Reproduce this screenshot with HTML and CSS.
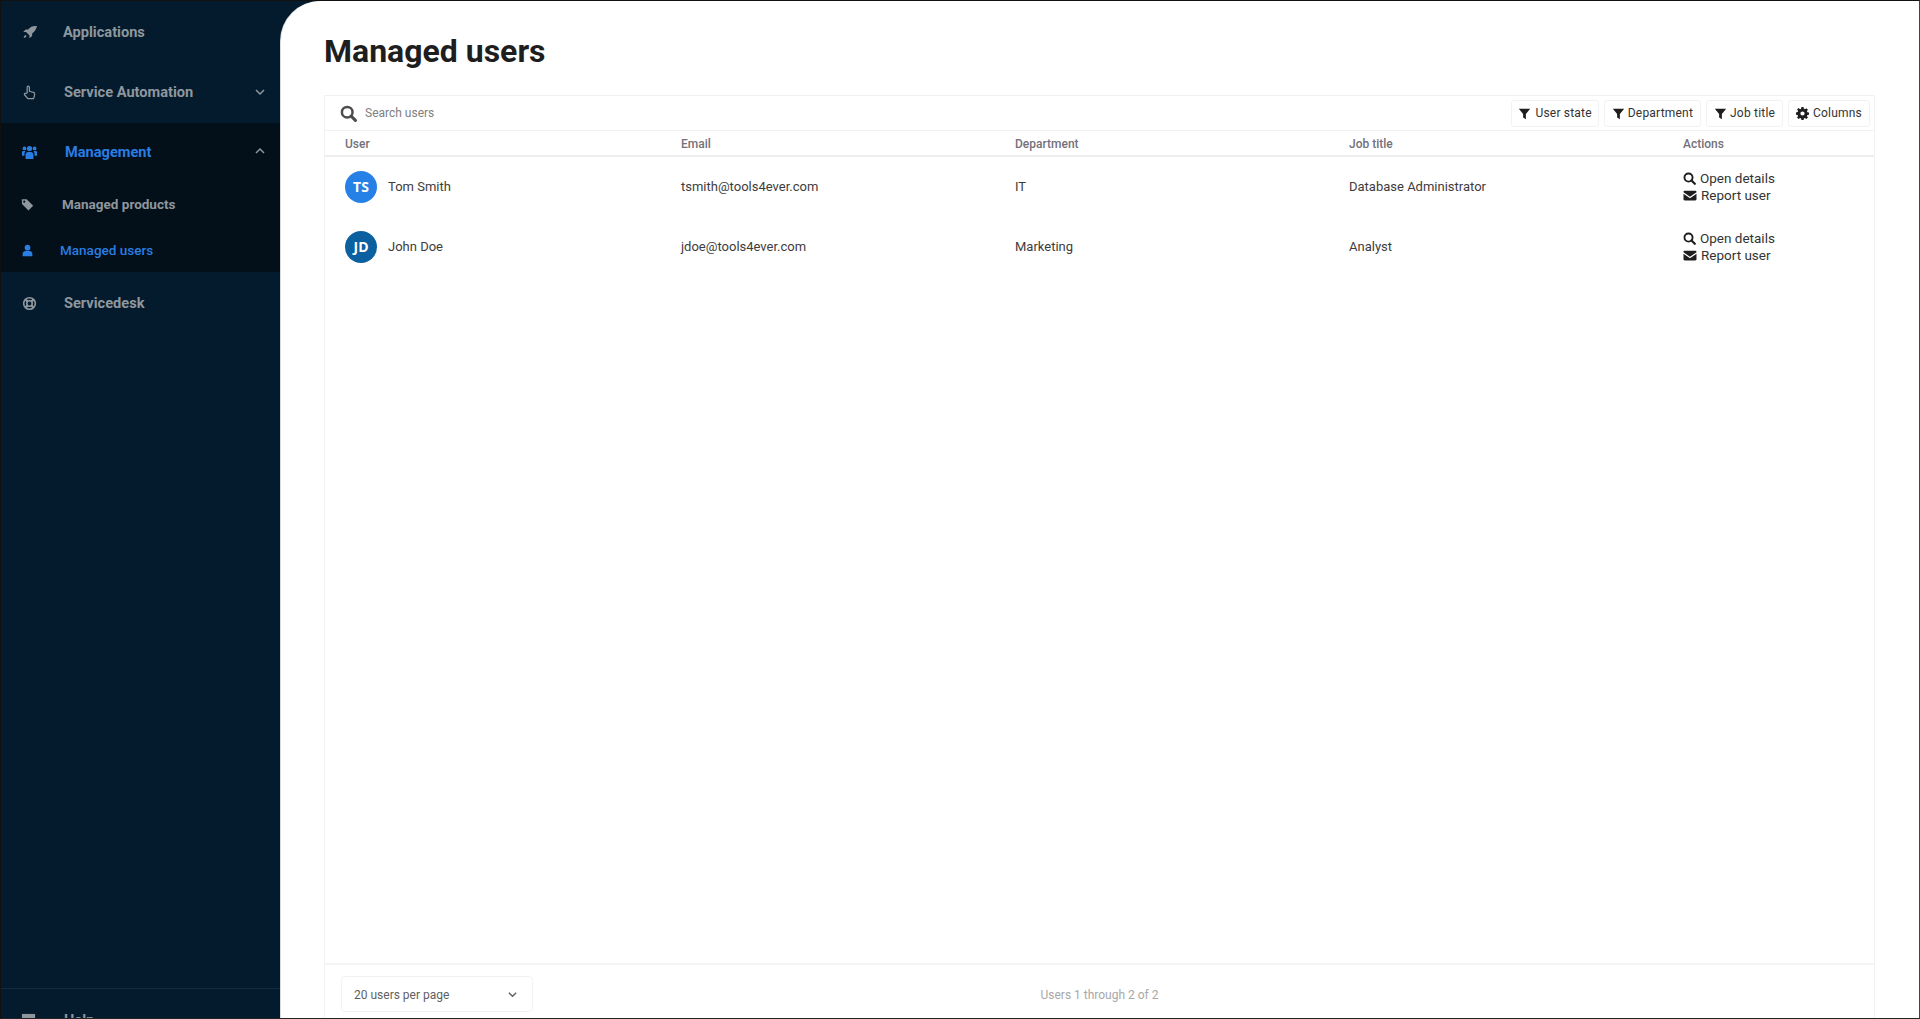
FILE: index.html
```html
<!DOCTYPE html>
<html lang="en">
<head>
<meta charset="utf-8">
<title>Managed users</title>
<link rel="stylesheet" href="styles.css">
</head>
<body>
<svg class="defs" width="0" height="0" aria-hidden="true">
  <symbol id="i-filter" viewBox="0 0 16 16"><path d="M1 2h14L9.700 8.600V15l-3.400-2V8.600z" fill="currentColor"/></symbol>
  <symbol id="i-search" viewBox="0 0 16 16"><circle cx="6.800" cy="6.800" r="5" fill="none" stroke="currentColor" stroke-width="2.300"/><path d="M10.500 10.500l4 4" stroke="currentColor" stroke-width="2.800" stroke-linecap="round"/></symbol>
  <symbol id="i-mail" viewBox="0 0 16 16"><path d="M0 3.500C0 2.700.7 2 1.500 2h13c.8 0 1.500.7 1.500 1.500v.6L8 9.600 0 4.100zM0 5.900v6.600c0 .8.7 1.500 1.500 1.500h13c.8 0 1.500-.7 1.500-1.500V5.900l-8 5.500z" fill="currentColor"/></symbol>
  <symbol id="i-gear" viewBox="0 0 16 16"><path fill-rule="evenodd" d="M6.700 0h2.600l.4 2.200 1.300.6 1.800-1.300 1.900 1.900-1.300 1.800.6 1.300 2 .4v2.600l-2 .4-.6 1.300 1.300 1.800-1.900 1.900-1.800-1.300-1.300.6-.4 2.200H6.700l-.4-2.200-1.300-.6-1.800 1.300-1.900-1.900 1.300-1.800-.6-1.300-2-.4V6.700l2-.4.6-1.300-1.300-1.800 1.900-1.900L5 2.800l1.300-.6zM8 5.400a2.600 2.600 0 1 0 0 5.200 2.600 2.600 0 0 0 0-5.200z" fill="currentColor"/></symbol>
  <symbol id="i-chev" viewBox="0 0 12 12"><path d="M2 4l4 4 4-4" fill="none" stroke="currentColor" stroke-width="1.500"/></symbol>
</svg>
<div class="app">
  <aside class="sidebar">
    <nav class="nav">
      <a class="nav-item nav-apps">
        <svg class="nav-icon" viewBox="0 0 16 16"><path d="M15 1c-3.500-.2-6.300 1-8.400 3.700H3.900L1.300 7.500h3l3.700 3.700-.1 3 2.900-2.600V9c2.900-2 4.300-4.700 5.200-8zM3.800 10.700c-1.100.4-1.800 1.500-2 3 1.500-.2 2.600-.9 3-2z" fill="currentColor"/></svg>
        <span class="nav-label">Applications</span>
      </a>
      <a class="nav-item nav-auto">
        <svg class="nav-icon" viewBox="0 0 16 16"><path d="M5.500 8.500V2.300a1.200 1.200 0 0 1 2.400 0v4.500l3.800.9c1 .2 1.800 1 1.800 2.100 0 1.700-.5 3-1.200 4.700H6.300L2.700 10.400c-.8-1.100.7-2.400 1.700-1.400z" fill="none" stroke="currentColor" stroke-width="1.300"/></svg>
        <span class="nav-label">Service Automation</span>
        <svg class="chev"><use href="#i-chev"/></svg>
      </a>
      <div class="group">
        <a class="nav-item nav-mgmt active">
          <svg class="nav-icon" viewBox="0 0 16 16"><circle cx="8" cy="3.800" r="2.800" fill="currentColor"/><circle cx="2.600" cy="3.600" r="2" fill="currentColor"/><circle cx="13.400" cy="3.600" r="2" fill="currentColor"/><path d="M3.800 15v-4.500C3.800 8.500 5 7.400 6.500 7.400h3c1.500 0 2.700 1.100 2.700 3.100V15zM0 11.500V7.800C0 6.800.7 6.300 1.500 6.300h2.200C3 7.200 2.600 8.300 2.600 9.500v2zM16 11.500V7.800c0-1-.7-1.500-1.500-1.500h-2.200c.7.900 1.100 2 1.100 3.200v2z" fill="currentColor"/></svg>
          <span class="nav-label">Management</span>
          <svg class="chev chev-up"><use href="#i-chev"/></svg>
        </a>
        <a class="sub-item sub-products">
          <svg class="sub-icon" viewBox="0 0 16 16"><path fill-rule="evenodd" d="M1 1.500h6l8 8-5.800 5.800-8-8zM4 3.200a1.300 1.300 0 1 0 0 2.600 1.300 1.300 0 0 0 0-2.600z" fill="currentColor"/></svg>
          <span>Managed products</span>
        </a>
        <a class="sub-item sub-users active">
          <svg class="sub-icon" viewBox="0 0 16 16"><circle cx="8" cy="4.500" r="3.500" fill="currentColor"/><path d="M2 15v-3c0-2 1.500-3.500 3.500-3.500h5c2 0 3.500 1.500 3.500 3.500v3z" fill="currentColor"/></svg>
          <span>Managed users</span>
        </a>
      </div>
      <a class="nav-item nav-desk">
        <svg class="nav-icon" viewBox="0 0 16 16"><circle cx="8" cy="8" r="6.200" fill="none" stroke="currentColor" stroke-width="1.700"/><circle cx="8" cy="8" r="2.900" fill="none" stroke="currentColor" stroke-width="1.700"/><path d="M3.600 3.600l2.400 2.400M12.400 3.600L10 6M3.600 12.400L6 10M12.400 12.400L10 10" stroke="currentColor" stroke-width="2.400"/></svg>
        <span class="nav-label">Servicedesk</span>
      </a>
    </nav>
    <div class="side-foot">
      <a class="nav-item nav-help">
        <svg class="nav-icon help-icon" viewBox="0 0 16 16"><rect x="1" y="1" width="14" height="10" fill="currentColor"/></svg>
        <span class="nav-label">Help</span>
      </a>
    </div>
  </aside>
  <main class="content">
    <h1 class="title">Managed users</h1>
    <section class="panel">
      <div class="toolbar">
        <div class="search">
          <svg class="search-icon"><use href="#i-search"/></svg>
          <span class="search-text">Search users</span>
        </div>
        <div class="tools">
          <button class="tool tool-first"><svg class="tool-icon"><use href="#i-filter"/></svg>User state</button>
          <button class="tool"><svg class="tool-icon"><use href="#i-filter"/></svg>Department</button>
          <button class="tool"><svg class="tool-icon"><use href="#i-filter"/></svg>Job title</button>
          <button class="tool"><svg class="tool-icon gear"><use href="#i-gear"/></svg>Columns</button>
        </div>
      </div>
      <div class="row head">
        <div>User</div><div>Email</div><div>Department</div><div>Job title</div><div>Actions</div>
      </div>
      <div class="rows">
        <div class="row item">
          <div class="user"><span class="avatar a-blue">TS</span>Tom Smith</div>
          <div>tsmith@tools4ever.com</div><div>IT</div><div>Database Administrator</div>
          <div class="actions">
            <a class="action"><svg class="act-icon"><use href="#i-search"/></svg>Open details</a>
            <a class="action"><svg class="act-icon mail"><use href="#i-mail"/></svg>Report user</a>
          </div>
        </div>
        <div class="row item">
          <div class="user"><span class="avatar a-dark">JD</span>John Doe</div>
          <div>jdoe@tools4ever.com</div><div>Marketing</div><div>Analyst</div>
          <div class="actions">
            <a class="action"><svg class="act-icon"><use href="#i-search"/></svg>Open details</a>
            <a class="action"><svg class="act-icon mail"><use href="#i-mail"/></svg>Report user</a>
          </div>
        </div>
      </div>
      <div class="pager">
        <div class="per-page"><span>20 users per page</span><svg class="per-chev"><use href="#i-chev"/></svg></div>
        <div class="count">Users 1 through 2 of 2</div>
      </div>
    </section>
  </main>
</div>
</body>
</html>
```
FILE: styles.css
```css
* { box-sizing: border-box; }
html, body { margin: 0; height: 100%; overflow: hidden; }
body { font-family: Roboto, sans-serif; color: #333; background: #041b2d; }
.defs { position: absolute; }
.app {
  display: flex; height: 1019px; overflow: hidden;
  border: 1px solid #111; border-right-color: #3a4358; border-bottom-color: #222;
  background: #041b2d;
}
.sidebar { width: 280px; flex: none; display: flex; flex-direction: column; background: #041b2d; height: 1017px; overflow: hidden; }
.nav { flex: 1; display: flex; flex-direction: column; }
.nav-item { display: flex; align-items: center; height: 60px; color: #8f979e; font-size: 14.6px; font-weight: 700; position: relative; }
.nav-icon { width: 15px; height: 15px; margin-left: 21px; flex: none; }
.nav-label { margin-left: 27px; }
.nav-apps { height: 62px; }
.nav-apps .nav-label { margin-left: 26px; }
.nav-auto { height: 60px; padding-bottom: 2px; }
.nav-mgmt { height: 58px; }
.nav-mgmt .nav-label { margin-left: 28px; }
.active { color: #2a7de1; }
.chev { width: 12px; height: 12px; position: absolute; left: 253px; top: calc(50% - 7px); color: #8f979e; }
.chev-up { transform: rotate(180deg); }
.group { background: #030f19; display: flex; flex-direction: column; height: 149px; }
.sub-item { display: flex; align-items: center; height: 46px; font-size: 13.5px; font-weight: 700; color: #8f979e; }
.sub-item.active { color: #2a7de1; font-weight: 500; height: 45px; padding-top: 1px; }
.sub-icon { width: 13px; height: 13px; margin-left: 20px; flex: none; }
.sub-products span { margin-left: 28px; }
.sub-users span { margin-left: 26px; }
.nav-desk { height: 62px; }
.side-foot { border-top: 1px solid #162c3d; height: 30px; flex: none; margin-top: auto; }
.side-foot .nav-item { height: 62px; }
.help-icon { margin-left: 20px; }
.help-icon + .nav-label { margin-left: 28px; }
.content {
  flex: 1; min-width: 0; background: #fff; border-top-left-radius: 40px;
  padding: 28px 44px 0 43px; display: flex; flex-direction: column; height: 1017px; overflow: hidden;
  box-shadow: -1px 0 0 #d8dbe0;
}
.title { margin: 0 0 22px; font-size: 32px; line-height: 44px; font-weight: 700; color: #1e1e1e; }
.panel { flex: 1; min-height: 0; border: 1px solid #f2f2f2; display: flex; flex-direction: column; border-bottom: 0; }
.toolbar { height: 35px; flex: none; display: flex; align-items: center; justify-content: space-between; padding: 0 4px 0 15px; border-bottom: 1px solid #f2f2f2; }
.search { display: flex; align-items: center; gap: 8px; }
.search-icon { width: 17px; height: 17px; color: #4c4c4c; }
.search-text { font-size: 12px; color: #80807f; }
.tools { display: flex; gap: 5px; }
.tool {
  height: 27px; padding: 0 7px; display: flex; align-items: center; gap: 3px; background: #fff;
  border: 1px solid #f2f2f2; border-radius: 3px; font: 400 12px Roboto, sans-serif; color: #333; letter-spacing: .2px;
}
.tool-first { padding-left: 6px; gap: 4px; padding-right: 6px; }
.tool-icon { width: 13px; height: 13px; color: #1e1e1e; }
.gear { margin-right: 1px; }
.row { display: grid; grid-template-columns: 336px 334px 334px 334px 1fr; padding: 0 0 0 20px; align-items: center; font-size: 13px; }
.head { height: 26px; flex: none; padding-top: 2px; font-size: 12px; font-weight: 500; color: #74717a; border-bottom: 2px solid #eeeeee; }
.rows { flex: 1; display: flex; flex-direction: column; min-height: 0; }
.item { height: 60px; padding-bottom: 1px; color: #3e3c3c; }
.user { display: flex; align-items: center; gap: 11px; }
.avatar { width: 32px; height: 32px; border-radius: 50%; display: flex; align-items: center; justify-content: center; color: #fff; font: 700 14px "Open Sans", sans-serif; }
.a-blue { background: #2681e6; }
.a-dark { background: #0b619f; }
.actions { display: flex; flex-direction: column; }
.action { display: flex; align-items: center; gap: 4px; line-height: 17px; font-size: 13.5px; color: #333; }
.act-icon { width: 13px; height: 13px; color: #1e1e1e; }
.mail { width: 14px; }
.pager { height: 55px; flex: none; border-top: 2px solid #f4f4f4; display: flex; align-items: flex-start; position: relative; padding: 11px 0 0 16px; }
.per-page { width: 192px; height: 36px; border: 1px solid #f2f2f2; border-radius: 4px; display: flex; align-items: center; justify-content: space-between; padding: 1px 14px 0 12px; font-size: 12px; color: #5f5f5f; }
.per-chev { width: 11px; height: 11px; color: #5f5f5f; }
.count { position: absolute; left: 0; right: 0; top: 23px; text-align: center; font-size: 12px; color: #a8a8a8; }
```
